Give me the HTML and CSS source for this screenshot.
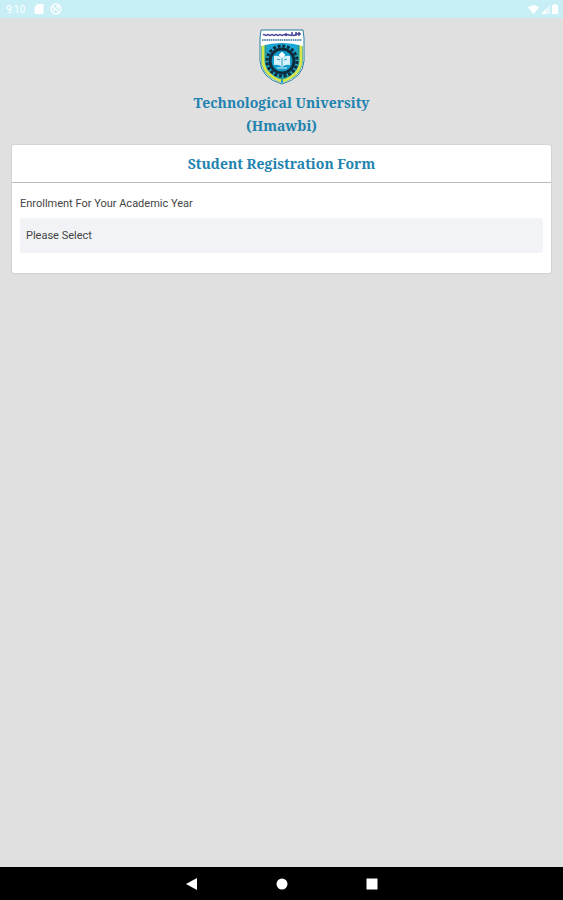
FILE: index.html
```html
<!DOCTYPE html>
<html lang="en">
<head>
    <meta charset="UTF-8">
    <meta name="viewport" content="width=device-width, initial-scale=1.0">
    <title>Student Registration Form</title>
    <link rel="stylesheet" href="styles.css">
</head>
<body>
    <div class="status-bar">
        <div class="status-left">
            <span class="clock">9:10</span>
            <svg width="10" height="10" viewBox="0 0 10 10" fill="#fff"><path d="M3.5 0H8.5Q9.5 0 9.5 1V9Q9.5 10 8.5 10H1.500Q.5 10 .5 9V3Z"/></svg>
            <svg width="12" height="12" viewBox="0 0 12 12" fill="none" stroke="#fff" stroke-width="1.3"><circle cx="6" cy="6" r="5"/><path d="M3 3.500L8.500 9M4 8.500V5.500M6 3.500H8.500V6"/></svg>
        </div>
        <div class="status-right">
            <svg width="11" height="9" viewBox="0 0 11 9" fill="#fff"><path d="M0 2.500Q5.500 -2 11 2.500L5.500 9Z"/></svg>
            <svg width="9" height="9" viewBox="0 0 9 9"><path d="M9 0V9H0Z" fill="#fff" opacity=".5"/><path d="M5 4V9H0Z" fill="#fff"/></svg>
            <svg width="6" height="10" viewBox="0 0 6 10" fill="#fff"><path d="M2 0H4V1H6V10H0V1H2Z"/></svg>
        </div>
    </div>

    <main class="page">
        <header class="school">
            <svg class="logo" width="46" height="56" viewBox="0 0 46 56" role="img" aria-label="University logo">
                <path d="M2 1H44L45 9V32Q44 49 23 55Q2 49 1 32V9Z" fill="#fff" stroke="#2b7f9f"/>
                <path d="M2 14H44V32Q43 48 23 54Q3 48 2 32Z" fill="#1599cc"/>
                <path d="M4 14V32Q5 46 22 52" fill="none" stroke="#d9e64a" stroke-width="3"/>
                <path d="M42 14V32Q41 46 24 52" fill="none" stroke="#d9e64a" stroke-width="3"/>
                <path d="M7 15V32Q8 44 23 50Q38 44 39 32V15" fill="#19a7d8" stroke="#3b9e62" stroke-width="1"/>
                <path d="M2 14Q13 12 23 13T44 14V17Q34 14 23 14T2 17Z" fill="#fff"/>
                <path d="M4 6Q5 5 6 6T8 6T10 6T12 6T14 6T16 6T18 6T20 6T22 6T24 6T26 6T28 6T30 6T32 6T34 6T36 6T38 5T40 5T42 5M27 4V7M33 3V7M37 3V7M40 3V7" fill="none" stroke="#4b4499" stroke-width="1.500"/>
                <path d="M3 11H43" stroke="#5b8fb4" stroke-width="2" stroke-dasharray="1.500 .7"/>
                <circle cx="23" cy="32" r="15" fill="none" stroke="#102d3e" stroke-width="3" stroke-dasharray="3 1.700"/>
                <circle cx="23" cy="32" r="12" fill="#139bc9" stroke="#102d3e" stroke-width="3"/>
                <path d="M15 27Q20 26 23 29Q26 26 31 27V36Q26 35 23 38Q20 35 15 36Z" fill="#d7f2fa"/>
                <path d="M23 23L26 26L23 29L20 26ZM18 39H28" fill="#fff" stroke="#d7f2fa" stroke-width="1"/>
                <path d="M23 29V37M18 30L21 31M28 30L25 31" stroke="#299dc3"/>
            </svg>
            <h1>Technological University<br>(Hmawbi)</h1>
        </header>

        <form class="card">
            <h2>Student Registration Form</h2>
            <div class="card-body">
                <label for="year">Enrollment For Your Academic Year</label>
                <select id="year" name="year">
                    <option>Please Select</option>
                </select>
            </div>
        </form>
    </main>

    <nav class="nav-bar">
        <button type="button" aria-label="Back">
            <svg width="12" height="12" viewBox="0 0 12 12"><path d="M11 0V12L0 6Z" fill="#fff"/></svg>
        </button>
        <button type="button" aria-label="Home">
            <svg width="12" height="12" viewBox="0 0 12 12"><circle cx="6" cy="6" r="5.500" fill="#fff"/></svg>
        </button>
        <button type="button" aria-label="Recent apps">
            <svg width="12" height="12" viewBox="0 0 12 12"><path d="M.5 .5H11.500V11.500H.5Z" fill="#fff"/></svg>
        </button>
    </nav>
</body>
</html>
```
FILE: styles.css
```css
* {
    box-sizing: border-box;
}

body {
    margin: 0;
    min-height: 100vh;
    display: flex;
    flex-direction: column;
    background: #e0e0e0;
    font-family: Roboto, sans-serif;
    color: #444;
}

/* status bar */
.status-bar {
    display: flex;
    justify-content: space-between;
    align-items: center;
    height: 18px;
    padding: 0 5px 0 6px;
    background: #c8eff6;
    color: #fff;
}

.status-left,
.status-right {
    display: flex;
    align-items: center;
}

.status-left {
    gap: 6px;
}

.status-right {
    gap: 2px;
}

.clock {
    width: 22px;
    font-size: 10px;
}

.page {
    flex: 1;
    padding: 11px 12px;
}

/* logo and school name */
.school {
    text-align: center;
}

.logo {
    display: block;
    margin: 0 auto;
}

h1,
h2 {
    margin: 0;
    font-family: "Noto Serif", "Liberation Serif", serif;
    font-size: 14px;
    line-height: 23px;
    font-weight: bold;
    color: #1f83b0;
}

h1 {
    margin: 6px 0 8px;
}

/* form card */
.card {
    background: #fff;
    border-radius: 2px;
    box-shadow: 0 0 2px rgba(0, 0, 0, 0.2);
}

h2 {
    padding: 7px 8px;
    border-bottom: 1px solid #bbb;
    text-align: center;
}

.card-body {
    padding: 12px 8px 20px;
}

label {
    display: block;
    margin-bottom: 6px;
    font-size: 11px;
    line-height: 17px;
}

select {
    appearance: none;
    display: block;
    width: 100%;
    height: 35px;
    padding: 0 6px;
    border: none;
    border-radius: 3px;
    background: #f1f3f6;
    color: #444;
    font-family: inherit;
    font-size: 11px;
}

/* bottom navigation */
.nav-bar {
    display: flex;
    justify-content: center;
    align-items: center;
    gap: 66px;
    height: 33px;
    background: #000;
}

.nav-bar button {
    display: flex;
    justify-content: center;
    width: 24px;
    padding: 6px;
    border: none;
    background: none;
}
```
